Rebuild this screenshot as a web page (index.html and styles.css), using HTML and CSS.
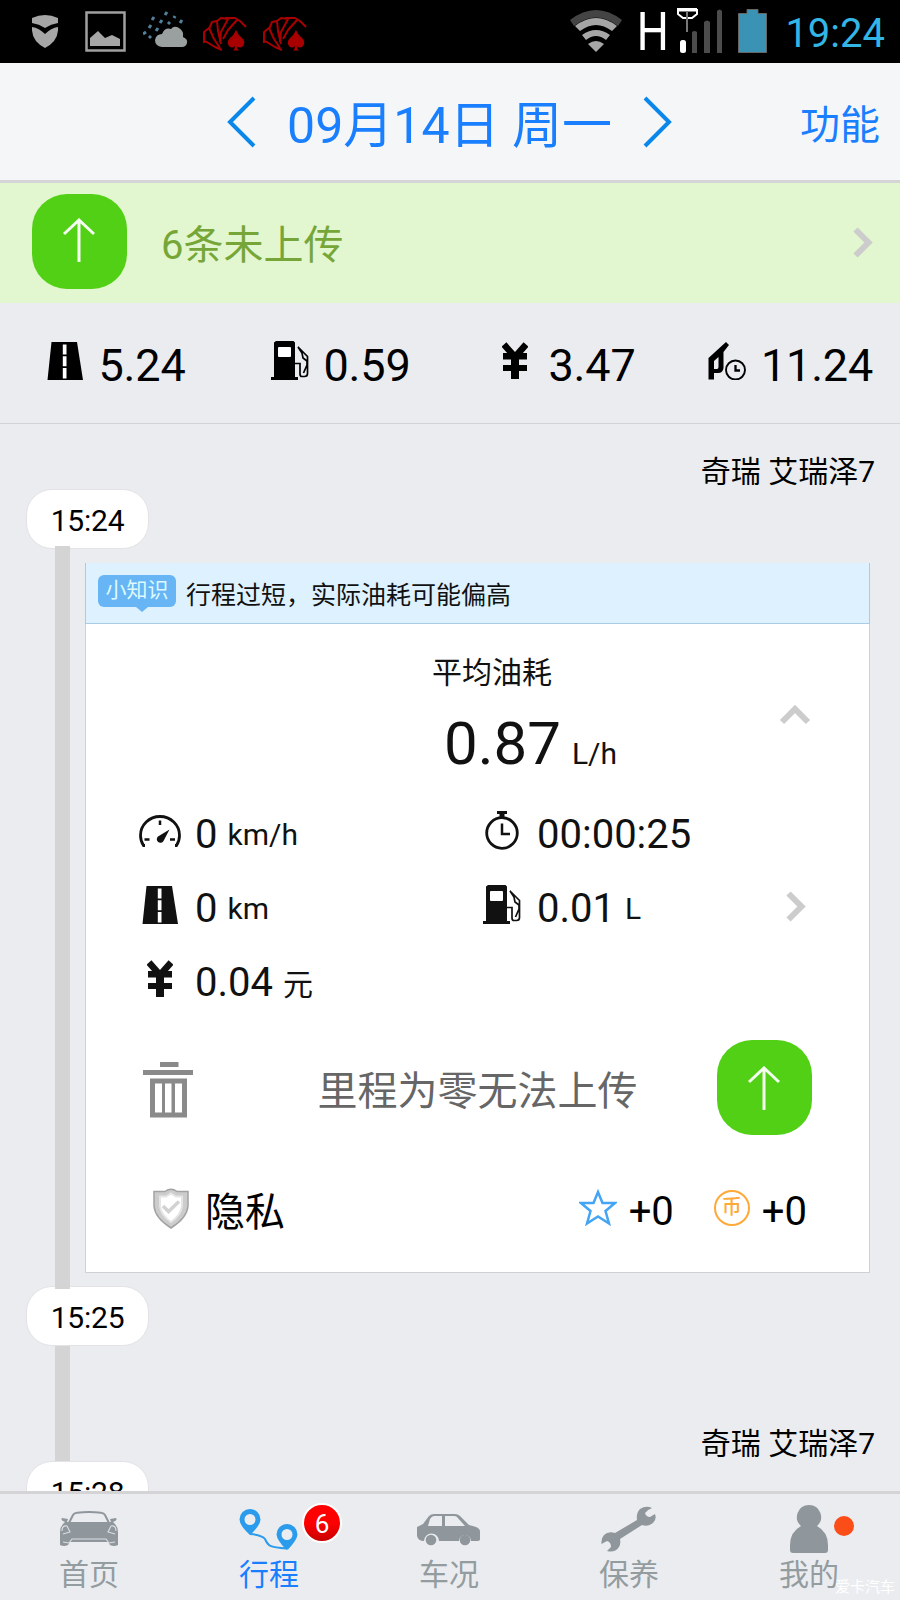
FILE: index.html
```html
<!DOCTYPE html>
<html lang="zh-CN">
<head>
  <meta charset="UTF-8" />
  <meta name="viewport" content="width=device-width, initial-scale=1.0"/>
  <title>行程</title>
  <link rel="stylesheet" href="styles.css">
</head>
<body>

  <!-- shared icons -->
  <svg class="defs" width="0" height="0">
    <symbol id="road" viewBox="0 0 36 38">
      <path fill="currentColor" d="M4.500 0H30L36 38H0.500Z"/>
      <path fill="#fff" d="M15.800 2.500h3.700v10h-3.700zM15.800 14.200h3.700v10h-3.700zM15.800 26h3.700v10.500h-3.700z"/>
    </symbol>
    <symbol id="pump" viewBox="0 0 38 39">
      <path fill="currentColor" d="M5 0H22.500L24 1.500V36H27V39H0V36H3V1.500Z"/>
      <rect x="7" y="6" width="13" height="10" rx="1" fill="#fff"/>
      <path fill="none" stroke="currentColor" stroke-width="1.700" d="M24 22.500H29V33Q29 35.500 31 35.500H33.500Q36.500 35.500 36.500 32.500V15.500L27 6L31 12L32 17L36 20V24L32.500 32"/>
    </symbol>
    <symbol id="yen" viewBox="0 0 26 37">
      <path fill="none" stroke="currentColor" stroke-width="6.500" d="M2 2.500L13 15L24 2.500"/>
      <path fill="currentColor" d="M1 11H25V17.500H17V23H25V29H17V37H9V29H1V23H9V17.500H1Z"/>
    </symbol>
    <symbol id="up" viewBox="0 0 32 44">
      <path fill="none" stroke="#f4fdf0" stroke-width="3" d="M1 16L16 2L31 16M16 2V44"/>
    </symbol>
    <symbol id="more" viewBox="0 0 20 31">
      <path fill="none" stroke="#ccc" stroke-width="6" d="M2.500 2.500L15.500 15.500L2.500 28.500"/>
    </symbol>
    <symbol id="cards" viewBox="0 0 44 34">
      <g fill="none" stroke="#a80000" stroke-width="2" stroke-linejoin="round">
        <path d="M1 26V15L6 11L11 22L17 31"/>
        <path d="M2 24L12 30L19 33"/>
        <path d="M6 12L9 5L14 4L15 14L18 27"/>
        <path d="M14 4L18 1L25 2L18 15L17 25"/>
        <path d="M22 1L32 1L37 4L43 10M34 3L25 13L20 22"/>
      </g>
      <path fill="#a80000" d="M33 13Q35 18 39 21Q43 25 40 29Q37 32 34 29Q34 32 36 33.500H30Q32 32 32 29Q29 32 26 29Q23 25 27 21Q31 18 33 13Z"/>
    </symbol>
  </svg>

  <div class="status-bar">
    <div class="status-left">
      <svg width="26" height="33" viewBox="0 0 26 33"><path fill="#a6a6a6" d="M0 3Q13-3 26 3V8Q19 9 13 13Q7 9 0 8ZM0 12Q7 13 13 19Q19 13 26 12Q27 26 13 33Q-1 26 0 12Z"/></svg>
      <svg class="picture" width="41" height="41" viewBox="0 0 41 41"><rect x="1.500" y="1.500" width="38" height="38" fill="none" stroke="#a0a0a0" stroke-width="2.500"/><path fill="#a6a6a6" d="M5 35V27L13 20L20 27L27 24L35 28V35Z"/></svg>
      <svg class="weather" width="45" height="37" viewBox="0 0 45 37">
        <path fill="#9a9f9f" d="M19 36Q12 35 12 29Q13 23 19 23Q22 16 28 18Q31 14 36 17Q41 20 40 26Q45 28 44 32Q43 36 39 36Z"/>
        <path stroke="#51819a" stroke-width="3" d="M22 4l2-3M31 7l1-2M37 12l2-3M9 9l2-3M17 12l2-3M25 13l2-2M6 17l2-3M0 23l3-2M13 20l2-3M6 27l2-2"/>
      </svg>
      <svg class="fan" width="44" height="34"><use href="#cards"/></svg>
      <svg class="fan fan-next" width="44" height="34"><use href="#cards"/></svg>
    </div>
    <div class="status-right">
      <svg width="52" height="42" viewBox="0 0 52 42">
        <path fill="#444" d="M0 10Q26-10 52 10L48 16Q26-1 4 16Z"/>
        <path fill="#a6a6a6" d="M5 16Q26 0 47 16L42 21Q26 9 10 21Z"/>
        <path fill="#a6a6a6" d="M12 25Q26 15 40 25L36 30Q26 22 16 30ZM18 34Q26 28 34 34L26 42Z"/>
      </svg>
      <span class="net">H</span>
      <svg class="signal" width="46" height="46" viewBox="0 0 46 46">
        <path fill="none" stroke="#fff" stroke-width="2" d="M1 2.500H20M1 1V6L6 10H15L20 6V1M0 1H20"/>
        <path stroke="#777" stroke-width="2" d="M10 3V24"/>
        <rect x="3" y="32" width="6" height="13" rx="2.500" fill="#fff"/>
        <path fill="#4c4c4c" d="M15 24q2.500-2 5 0v21h-5zM27 14q3-3 6 0v31h-6zM40 3q2.500-3 5 0v42h-5z"/>
      </svg>
      <svg class="battery" width="29" height="44" viewBox="0 0 29 44"><path fill="#3a92b4" stroke="#666" d="M.5 4.500H9V.5H20V4.500H28.500V43.500H.5Z"/></svg>
      <span class="clock">19:24</span>
    </div>
  </div>

  <header class="header">
    <div class="date-nav">
      <svg width="29" height="52" viewBox="0 0 29 52"><path fill="none" stroke="#0a87ea" stroke-width="4" d="M27 2L3 26L27 50"/></svg>
      <h1>09月14日 周一</h1>
      <svg width="29" height="52" viewBox="0 0 29 52"><path fill="none" stroke="#0a87ea" stroke-width="4" d="M2 2L26 26L2 50"/></svg>
    </div>
    <a class="menu">功能</a>
  </header>

  <div class="notice">
    <span class="upload"><svg width="32" height="44"><use href="#up"/></svg></span>
    <span class="notice-text">6条未上传</span>
    <svg class="notice-more" width="20" height="31"><use href="#more"/></svg>
  </div>

  <div class="stats">
    <div class="stat"><span class="icon"><svg width="36" height="38"><use href="#road"/></svg></span>5.24</div>
    <div class="stat"><span class="icon"><svg width="38" height="39"><use href="#pump"/></svg></span>0.59</div>
    <div class="stat"><span class="icon"><svg width="26" height="37"><use href="#yen"/></svg></span>3.47</div>
    <div class="stat">
      <span class="icon">
        <svg width="38" height="38" viewBox="0 0 38 38">
          <path fill="currentColor" fill-rule="evenodd" d="M18 0L21 3L15.500 10V26Q15 31 10 31H6V37.500H0.500V16ZM10.500 15L6 19V27H9Q10.500 27 10.500 25Z"/>
          <circle cx="27.500" cy="28" r="9.500" fill="none" stroke="currentColor" stroke-width="1.900"/>
          <path fill="none" stroke="currentColor" stroke-width="2.300" d="M27.500 23V28.500H32"/>
        </svg>
      </span>11.24
    </div>
  </div>

  <main class="trips">
    <div class="trip-head first"><span>奇瑞 艾瑞泽7</span></div>
    <div class="time">15:24</div>

    <div class="trip-body">
      <div class="card">
        <div class="tip">
          <span class="tip-badge">小知识</span>
          <span>行程过短，实际油耗可能偏高</span>
        </div>

        <div class="summary">
          <div>
            <p class="summary-title">平均油耗</p>
            <p class="summary-value">0.87 <small>L/h</small></p>
          </div>
          <svg width="32" height="21" viewBox="0 0 32 21"><path fill="none" stroke="#ccc" stroke-width="6" d="M3 18L16 5L29 18"/></svg>
        </div>

        <div class="detail">
          <div class="metrics">
            <div class="metric">
              <span class="icon">
                <svg width="42" height="32" viewBox="0 0 42 32">
                  <path fill="none" stroke="currentColor" stroke-width="2.800" d="M6 30.500H4.500Q1.500 26 1.500 20.500A19.500 19 0 0 1 40.500 20.500Q40.500 26 37.500 30.500H36"/>
                  <path fill="none" stroke="currentColor" stroke-width="2.500" d="M21 5.500V10M5.500 24.500H10.500M31 24.500H36"/>
                  <path fill="currentColor" d="M30.500 14.500L24.500 26A3.600 3.600 0 1 1 19 21.500Z"/>
                </svg>
              </span>
              <b>0</b><small>km/h</small>
            </div>
            <div class="metric">
              <span class="icon">
                <svg width="34" height="39" viewBox="0 0 34 39">
                  <circle cx="17" cy="22" r="15.300" fill="none" stroke="currentColor" stroke-width="2.800"/>
                  <path fill="currentColor" d="M12 0H22V3H19.500V7H14.500V3H12Z"/>
                  <path fill="none" stroke="currentColor" stroke-width="2.500" d="M17 12.500V23H25"/>
                </svg>
              </span>
              <b>00:00:25</b>
            </div>
            <div class="metric"><span class="icon"><svg width="36" height="38"><use href="#road"/></svg></span><b>0</b><small>km</small></div>
            <div class="metric"><span class="icon"><svg width="38" height="39"><use href="#pump"/></svg></span><b>0.01</b><small>L</small></div>
            <div class="metric"><span class="icon"><svg width="26" height="37"><use href="#yen"/></svg></span><b>0.04</b><small>元</small></div>
          </div>
          <svg width="20" height="31"><use href="#more"/></svg>
        </div>

        <div class="actions">
          <svg width="50" height="56" viewBox="0 0 50 56">
            <path fill="#8a8a8a" fill-rule="evenodd" d="M17 0H35.500V5H17ZM0 8H50V13H0ZM7 16.500H44V55.500H7ZM12 21.500V50.500H19V21.500ZM22 21.500V50.500H28.500V21.500ZM32 21.500V50.500H39V21.500Z"/>
          </svg>
          <span class="actions-text">里程为零无法上传</span>
          <span class="upload"><svg width="32" height="44"><use href="#up"/></svg></span>
        </div>

        <div class="rewards">
          <svg width="36" height="41" viewBox="0 0 36 41">
            <path fill="#ccc" stroke="#a2a2a2" stroke-width="1.500" d="M1 3.500H12Q18-1 24 3.500H35V18Q34 30 18 40Q2 30 1 18Z"/>
            <path fill="#fff" stroke="#e5e5e5" stroke-width="2" d="M7 8.500H13L18 5.500L23 8.500H29V18Q28 27 18 34Q8 27 7 18Z"/>
            <path fill="none" stroke="#d2d2d2" stroke-width="3.500" d="M10 18L15.500 23.500L26 13.500"/>
          </svg>
          <span class="privacy">隐私</span>
          <svg class="star" width="38" height="37" viewBox="0 0 38 37"><path fill="none" stroke="#45a5f5" stroke-width="2.500" d="M19 3L23.500 14H36L26.500 22L30 34.500L19 27.500L8 34.500L11.500 22L2 14H14.500Z"/></svg>
          <span class="plus">+0</span>
          <span class="coin">币</span>
          <span class="plus">+0</span>
        </div>
      </div>
    </div>

    <div class="time">15:25</div>
    <div class="trip-head next"><span>奇瑞 艾瑞泽7</span></div>
    <div class="time">15:28</div>
  </main>

  <nav class="tabs">
    <a class="tab">
      <span class="tab-icon">
        <svg width="60" height="36" viewBox="0 0 60 36">
          <path fill="none" stroke="#8f979d" stroke-width="2" d="M10 12L14 4Q15 2 18 1.700Q30 .5 42 1.700Q45 2 46 4L50 12"/>
          <path fill="#8f979d" d="M3 7L9 8L8 11H52L51 8L57 7Q59 9 54 11Q59 15 59 21V34Q55 36 51 34L49 31H11L9 34Q5 36 1 34V21Q1 15 6 11Q1 9 3 7Z"/>
          <path fill="none" stroke="#dcdfe3" stroke-width="1.100" d="M3 20Q3 14 8 15L11 21L4 23M4 31L10 32L13 28H47L50 32L56 31M56 23L49 21L52 15Q57 14 57 20"/>
        </svg>
      </span>
      <span>首页</span>
    </a>
    <a class="tab active">
      <span class="tab-icon">
        <svg width="60" height="41" viewBox="0 0 60 41">
          <path fill="#2b9bec" fill-rule="evenodd" d="M11 0A10.500 10.500 0 0 1 21.500 10.500Q21 17 11 26Q1 17 .5 10.500A10.500 10.500 0 0 1 11 0ZM11 5A5.500 5.500 0 1 0 11 16A5.500 5.500 0 1 0 11 5ZM48 15A10.500 10.500 0 0 1 58.500 25.500Q58 31 49 40.500H47Q38 31 37.500 25.500A10.500 10.500 0 0 1 48 15ZM48 20A5.500 5.500 0 1 0 48 31A5.500 5.500 0 1 0 48 20Z"/>
          <path fill="none" stroke="#2b9bec" stroke-width="2" d="M11 25Q23 26 26 30C29 37 30 38 48 39.500"/>
        </svg>
        <i class="badge">6</i>
      </span>
      <span>行程</span>
    </a>
    <a class="tab">
      <span class="tab-icon">
        <svg width="64" height="33" viewBox="0 0 64 33">
          <path fill="#8f979d" fill-rule="evenodd" d="M0 14L6 11L12 3Q14 1 17 1H38Q41 1 43 3L52 12Q63 14 63 18V26Q63 28 60 28H54A6 6 0 0 0 42 28H22A7 7 0 0 0 7 28Q1 28 0 23ZM11 13H25V3H17Q15 3 13 6ZM28 3V13H48L40 4Q39 3 37 3Z"/>
          <circle cx="14" cy="27" r="5.300" fill="#8f979d"/><circle cx="48" cy="27" r="5.300" fill="#8f979d"/>
        </svg>
      </span>
      <span>车况</span>
    </a>
    <a class="tab">
      <span class="tab-icon">
        <svg width="56" height="46" viewBox="0 0 56 46">
          <path fill="#8f979d" d="M51 2Q45-1 39 3Q35 7 36 14L14 27Q7 25 3 29Q0 32 .5 38L6 35Q10 36 10 41L6 45Q14 47 18 41Q20 38 19 33L41 19Q47 21 52 17Q56 13 54 8L49 11Q45 11 44 7Q46 4 51 2Z"/>
        </svg>
      </span>
      <span>保养</span>
    </a>
    <a class="tab">
      <span class="tab-icon">
        <svg width="38" height="48" viewBox="0 0 38 48"><path fill="#8f979d" d="M19 0A12 12 0 0 1 27 21Q38 27 38 40V45Q38 48 35 48H3Q0 48 0 45V40Q0 27 11 21A12 12 0 0 1 19 0Z"/></svg>
        <i class="dot"></i>
      </span>
      <span>我的</span>
    </a>
    <span class="watermark">爱卡汽车</span>
  </nav>

</body>
</html>
```
FILE: styles.css
```css
* {
  box-sizing: border-box;
}
body {
  margin: 0;
  width: 900px;
  height: 1600px;
  overflow: hidden;
  display: flex;
  flex-direction: column;
  font-family: Roboto, 'Noto Sans CJK SC', sans-serif;
  background: #ebecf0;
  color: #000;
}
svg {
  display: block;
  flex: none;
}
.defs {
  position: absolute;
}
h1, p {
  margin: 0;
  font-weight: normal;
}
b, i {
  font-weight: normal;
  font-style: normal;
}

/* system bar */
.status-bar {
  flex: none;
  height: 63px;
  background: #000;
  display: flex;
  justify-content: space-between;
  padding: 0 15px 0 32px;
}
.status-left, .status-right {
  display: flex;
  align-items: center;
}
.picture {
  margin-left: 27px;
}
.weather {
  margin: 0 15px 4px 17px;
}
.fan {
  margin-top: 4px;
}
.fan-next {
  margin-left: 16px;
}
.status-right > svg:first-child {
  margin-bottom: 2px;
}
.net {
  color: #fff;
  font-size: 53px;
  line-height: 63px;
  width: 38px;
  margin-left: 12px;
  padding-top: 2px;
  transform: scaleX(0.85);
}
.signal {
  margin: 0 15px 2px 5px;
}
.battery {
  margin-right: 18px;
  margin-bottom: 1px;
}
.clock {
  color: #33b5e5;
  font-size: 40px;
  line-height: 63px;
  padding-top: 4px;
}

.header {
  flex: none;
  height: 120px;
  background: #f5f6f8;
  border-bottom: 3px solid #d5d5d8;
  color: #1a7fff;
  position: relative;
  display: flex;
  justify-content: center;
  align-items: center;
}
.date-nav {
  display: flex;
  align-items: center;
  gap: 31px;
  margin-right: 1px;
}
.header h1 {
  font-size: 50px;
  line-height: 60px;
  white-space: nowrap;
  padding-top: 9px;
}
.menu {
  position: absolute;
  right: 20px;
  font-size: 40px;
  line-height: 50px;
  padding-top: 9px;
}

.notice {
  flex: none;
  height: 120px;
  background: #e2f7cf;
  display: flex;
  align-items: center;
  padding: 0 27px 0 32px;
}
.upload {
  width: 95px;
  height: 95px;
  border-radius: 35px;
  background: #52d015;
  display: flex;
  align-items: center;
  justify-content: center;
  padding: 0 1px 4px 0;
}
.notice .upload {
  margin-bottom: 3px;
}
.notice-text {
  color: #77a638;
  font-size: 40px;
  line-height: 50px;
  margin-left: 34px;
  padding-top: 6px;
}
.notice-more {
  margin: 0 0 1px auto;
}

.stats {
  flex: none;
  height: 121px;
  border-bottom: 1px solid #d2d3d8;
  display: grid;
  grid-template-columns: repeat(4, 1fr);
}
.stat {
  display: flex;
  align-items: center;
  justify-content: center;
  gap: 15px;
  padding: 5px 0 0 6px;
  font-size: 45px;
  letter-spacing: -0.2px;
}
.icon {
  display: flex;
  justify-content: center;
}
.stat .icon {
  width: 38px;
  margin-bottom: 10px;
}

/* timeline */
.trips {
  flex: none;
  height: 1067px;
  overflow: hidden;
}
.trip-head {
  display: flex;
  justify-content: flex-end;
  align-items: flex-end;
  padding: 0 25px 2px 0;
  font-size: 30px;
  line-height: 30px;
}
.trip-head.first {
  height: 65px;
}
.trip-head.next {
  height: 115px;
  background: linear-gradient(#d4d4d4, #d4d4d4) 55px 0 / 15px 100% no-repeat;
}
.time {
  width: 123px;
  height: 60px;
  margin-left: 26px;
  border: 1px solid #e3e3e5;
  border-radius: 26px;
  background: #fff;
  font-size: 30px;
  line-height: 61px;
  text-align: center;
  letter-spacing: -0.2px;
}
.trip-body {
  position: relative;
  padding: 14px 30px 13px 85px;
}
.trip-body::before {
  content: '';
  position: absolute;
  left: 55px;
  top: -3px;
  bottom: -3px;
  width: 15px;
  background: #d4d4d4;
}

.card {
  height: 710px;
  background: #fff;
  border: 1px solid #d0d1d3;
  border-top: 0;
  color: #111;
}
.tip {
  height: 61px;
  margin: 0 -1px;
  background: #def1ff;
  border: 1px solid #a9cce5;
  border-top: 0;
  display: flex;
  align-items: center;
  font-size: 25px;
  padding-left: 12px;
}
.tip-badge {
  position: relative;
  width: 78px;
  height: 32px;
  margin: 0 10px 5px 0;
  border-radius: 6px;
  background: #67b5f5;
  color: #dcfaff;
  font-size: 21px;
  line-height: 31px;
  text-align: center;
}
.tip-badge::after {
  content: '';
  position: absolute;
  left: 38px;
  top: 32px;
  border: 6px solid transparent;
  border-top: 5px solid #67b5f5;
  border-bottom: 0;
}
.summary {
  height: 174px;
  display: flex;
  align-items: center;
  justify-content: space-between;
  padding: 8px 58px 0 346px;
}
.summary-title {
  font-size: 30px;
  line-height: 40px;
  padding-top: 11px;
}
.summary-value {
  font-size: 60px;
  line-height: 70px;
  padding: 16px 0 0 12px;
  word-spacing: -4px;
}
.summary svg {
  margin-bottom: 1px;
}
small {
  font-size: 30px;
}
.detail {
  height: 222px;
  display: flex;
  align-items: center;
  justify-content: space-between;
  padding: 0 63px 1px 53px;
}
.detail > svg {
  margin-bottom: 4px;
}
.metrics {
  display: grid;
  grid-template-columns: 342px 250px;
  grid-auto-rows: 74px;
}
.metric {
  display: flex;
  align-items: center;
}
.metric .icon {
  width: 42px;
  margin: 0 14px 8px 0;
}
.metric b {
  font-size: 40px;
}
.metric small {
  margin: 0 0 1px 10px;
}
.actions {
  height: 137px;
  display: flex;
  align-items: center;
  justify-content: space-between;
  padding: 0 57px 2px;
}
.actions svg:first-child {
  margin-top: 4px;
}
.actions-text {
  color: #666;
  font-size: 40px;
  padding: 1px 0 0 45px;
}
.rewards {
  display: flex;
  align-items: center;
  padding: 23px 62px 0 67px;
  color: #000;
  font-size: 40px;
  line-height: 60px;
}
.rewards svg {
  margin-bottom: 6px;
}
.privacy {
  margin-left: 16px;
  padding-top: 3px;
}
.rewards .star {
  margin: 0 12px 9px auto;
}
.coin {
  width: 36px;
  height: 36px;
  margin: 0 12px 8px 40px;
  border: 2.5px solid #ffa938;
  border-radius: 50%;
  color: #ffa938;
  font-size: 20px;
  font-weight: 500;
  line-height: 31px;
  text-align: center;
}

.tabs {
  flex: none;
  position: relative;
  height: 109px;
  border-top: 3px solid #d4d4d6;
  display: grid;
  grid-template-columns: repeat(5, 1fr);
}
.tab {
  display: flex;
  flex-direction: column;
  align-items: center;
  padding-right: 2px;
  color: #939c9f;
  font-size: 30px;
  line-height: 34px;
}
.tab.active {
  color: #1a7fff;
}
.tab-icon {
  position: relative;
  height: 64px;
  display: flex;
  align-items: center;
  padding-top: 6px;
}
.badge {
  position: absolute;
  left: 63px;
  top: 9px;
  width: 40px;
  height: 40px;
  border: 2px solid #fff;
  border-radius: 50%;
  background: linear-gradient(#f00 50%, #c80000);
  color: #fff;
  font-size: 26px;
  line-height: 38px;
  text-align: center;
}
.dot {
  position: absolute;
  left: 44px;
  top: 22px;
  width: 20px;
  height: 20px;
  border-radius: 50%;
  background: #fa4d17;
}
.watermark {
  position: absolute;
  right: 5px;
  bottom: 3px;
  color: #fff;
  font-size: 15px;
  line-height: 20px;
}
```
